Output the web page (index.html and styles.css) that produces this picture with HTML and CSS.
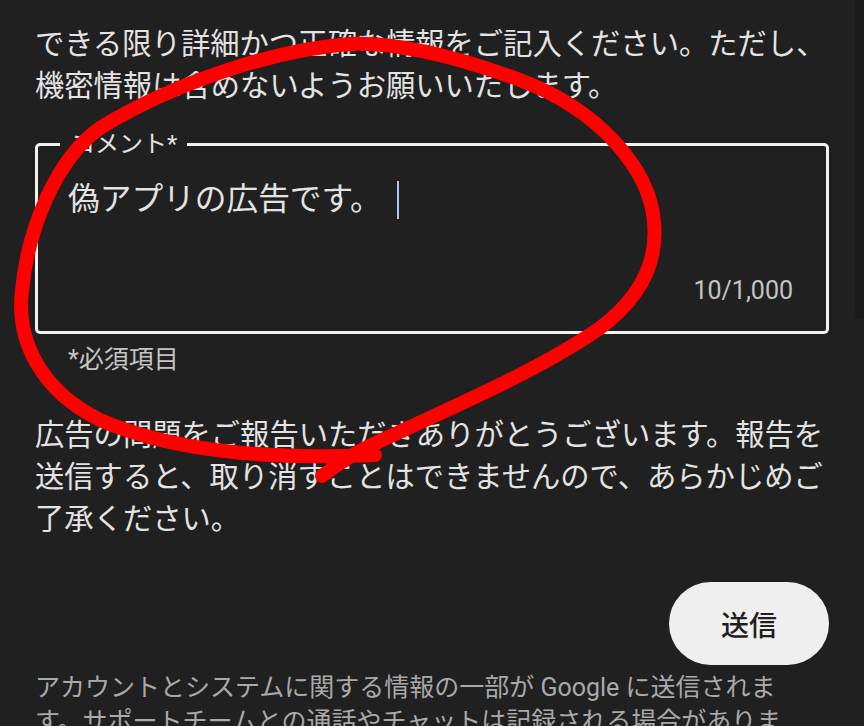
FILE: index.html
```html
<!DOCTYPE html>
<html lang="ja">
<head>
    <meta charset="UTF-8">
    <meta name="viewport" content="width=device-width, initial-scale=1.0">
    <title>広告を報告</title>
    <link rel="stylesheet" href="styles.css">
</head>
<body>
    <div class="page">
        <p class="intro">できる限り詳細かつ正確な情報をご記入ください。ただし、機密情報は含めないようお願いいたします。</p>

        <div class="field">
            <span class="fieldLabel">コメント*</span>
            <div class="fieldValue">偽アプリの広告です。<span class="caret"></span></div>
            <div class="counter">10/1,000</div>
        </div>
        <div class="required">*必須項目</div>

        <p class="thanks">広告の問題をご報告いただきありがとうございます。報告を送信すると、取り消すことはできませんので、あらかじめご了承ください。</p>

        <div class="actions">
            <button class="send">送信</button>
        </div>

        <p class="note">アカウントとシステムに関する情報の一部が Google に送信されます。サポートチームとの通話やチャットは記録される場合があります。</p>
    </div>

    <div class="scrollTrack"></div>

    <svg class="markup" width="864" height="726" viewBox="0 0 864 726">
        <path d="M322 476
                 C340 462, 360 450, 380 441
                 C450 408, 540 370, 600 328
                 C640 298, 658 262, 654 222
                 C650 170, 600 110, 520 80
                 C460 58, 400 42, 350 44
                 C270 50, 170 85, 100 128
                 C55 160, 28 230, 22 290
                 C16 340, 40 390, 100 420
                 C170 450, 260 460, 375 455"
              fill="none" stroke="#ff0000" stroke-width="14" stroke-linecap="round" stroke-linejoin="round"/>
    </svg>
</body>
</html>
```

FILE: styles.css
```css
* {
    margin: 0;
    padding: 0;
    box-sizing: border-box;
}
body {
    background-color: #202020;
    font-family: Roboto, "Noto Sans CJK JP", sans-serif;
    color: #e3e3e3;
    overflow: hidden;
}
.page {
    padding: 23px 35px 0 35px;
}
.intro, .thanks {
    font-size: 29.3px;
    line-height: 42px;
}
.field {
    position: relative;
    margin-top: 36px;
    height: 191px;
    border: 3px solid #f2f2f2;
    border-radius: 5px;
    padding: 34px 33px 25px 30px;
    display: flex;
    flex-direction: column;
    justify-content: space-between;
}
.fieldLabel {
    position: absolute;
    top: -17px;
    left: 22px;
    padding: 0 10px 0 11px;
    background-color: #202020;
    font-size: 24px;
    line-height: 30px;
    color: #e3e3e3;
}
.fieldValue {
    font-size: 31.7px;
    line-height: 40px;
    display: flex;
    align-items: center;
}
.caret {
    display: inline-block;
    width: 2px;
    height: 38px;
    margin-left: 15px;
    background-color: #a8c7fa;
}
.counter {
    align-self: flex-end;
    font-size: 25px;
    line-height: 30px;
    color: #c4c4c4;
}
.required {
    margin-top: 11px;
    padding-left: 33px;
    font-size: 25px;
    line-height: 30px;
    color: #c4c4c4;
}
.thanks {
    margin-top: 39px;
}
.actions {
    display: flex;
    justify-content: flex-end;
    margin-top: 42px;
}
.send {
    width: 160px;
    height: 83px;
    border: 0;
    border-radius: 42px;
    background-color: #efefef;
    color: #1f1f1f;
    font-family: Roboto, "Noto Sans CJK JP", sans-serif;
    font-size: 28px;
    font-weight: 500;
}
.note {
    margin-top: 6px;
    font-size: 25px;
    line-height: 34px;
    color: #a9a9a9;
    padding-right: 25px;
}
.scrollTrack {
    position: fixed;
    top: 0;
    right: 0;
    width: 9px;
    height: 318px;
    background-color: #1a1a1a;
}
.markup {
    position: absolute;
    top: 0;
    left: 0;
    pointer-events: none;
}
```
